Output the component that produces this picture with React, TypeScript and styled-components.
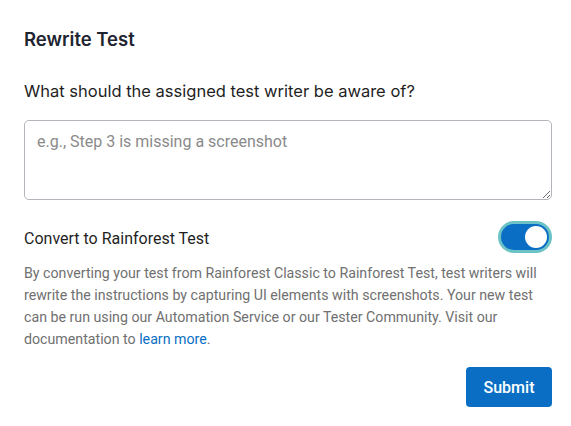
import React, { useState } from 'react';
import styled, { createGlobalStyle } from 'styled-components';

const GlobalStyle = createGlobalStyle`
    html, body {
        margin: 0;
        padding: 0;
        background: #ffffff;
    }
    body {
        font-family: Inter, "Noto Sans", "Liberation Sans", sans-serif;
        -webkit-font-smoothing: antialiased;
    }
`;

const Modal = styled.div`
    width: 571px;
    height: 426px;
    box-sizing: border-box;
    padding: 28px 19px 0 24px;
    display: flex;
    flex-direction: column;
    background: #ffffff;
`;

const Title = styled.h2`
    margin: 0;
    font-size: 18.5px;
    line-height: 22px;
    font-weight: 600;
    color: #1e2430;
`;

const FieldLabel = styled.label`
    margin-top: 30px;
    font-size: 16.5px;
    line-height: 22px;
    color: #1f1f1f;
`;

const NoteInput = styled.textarea`
    margin-top: 18px;
    width: 100%;
    height: 80px;
    box-sizing: border-box;
    padding: 10px 12px;
    border: 1px solid #b4b4bd;
    border-radius: 5px;
    font-family: Roboto, "Liberation Sans", sans-serif;
    font-size: 16px;
    line-height: 22px;
    color: #222;
    resize: vertical;
    outline: none;

    &::placeholder {
        color: #8a8a8a;
    }
`;

const ToggleRow = styled.div`
    margin-top: 21px;
    display: flex;
    align-items: center;
    justify-content: space-between;
`;

const ToggleLabel = styled.span`
    font-family: Roboto, "Liberation Sans", sans-serif;
    font-size: 16px;
    line-height: 22px;
    color: #1f1f1f;
    padding-top: 3px;
`;

const SwitchRing = styled.button<{ $on: boolean }>`
    width: 54px;
    height: 32px;
    box-sizing: border-box;
    padding: 3px;
    border: none;
    border-radius: 16px;
    background: ${p => (p.$on ? '#6cc3c6' : 'transparent')};
    cursor: pointer;
    display: flex;
`;

const SwitchTrack = styled.span<{ $on: boolean }>`
    flex: 1;
    border-radius: 13px;
    background: ${p => (p.$on ? '#0a6fc4' : '#c4c4cc')};
    display: flex;
    align-items: center;
    justify-content: ${p => (p.$on ? 'flex-end' : 'flex-start')};
    padding: 2px;
`;

const SwitchKnob = styled.span`
    width: 22px;
    height: 22px;
    border-radius: 50%;
    background: #ffffff;
`;

const Description = styled.p`
    margin: 9px 0 0;
    font-family: Roboto, "Liberation Sans", sans-serif;
    font-size: 14.2px;
    line-height: 22px;
    color: #707070;
`;

const DocLink = styled.a`
    color: #0a6fc4;
    text-decoration: none;
`;

const Footer = styled.div`
    margin-top: 17px;
    display: flex;
    justify-content: flex-end;
`;

const SubmitButton = styled.button`
    width: 86px;
    height: 40px;
    border: none;
    border-radius: 4px;
    background: #0a6fc4;
    color: #ffffff;
    font-family: Roboto, "Liberation Sans", sans-serif;
    font-size: 16px;
    font-weight: 500;
    cursor: pointer;
`;

const App = () => {
    const [converted, setConverted] = useState<boolean>(true);

    return (
        <>
            <GlobalStyle />
            <Modal>
                <Title>Rewrite Test</Title>
                <FieldLabel htmlFor="rewrite-note">What should the assigned test writer be aware of?</FieldLabel>
                <NoteInput id="rewrite-note" placeholder="e.g., Step 3 is missing a screenshot" />
                <ToggleRow>
                    <ToggleLabel>Convert to Rainforest Test</ToggleLabel>
                    <SwitchRing $on={converted} onClick={() => setConverted(!converted)} aria-pressed={converted}>
                        <SwitchTrack $on={converted}>
                            <SwitchKnob />
                        </SwitchTrack>
                    </SwitchRing>
                </ToggleRow>
                <Description>
                    By converting your test from Rainforest Classic to Rainforest Test, test writers will
                    rewrite the instructions by capturing UI elements with screenshots. Your new test
                    can be run using our Automation Service or our Tester Community. Visit our
                    documentation to <DocLink href="#">learn more</DocLink>.
                </Description>
                <Footer>
                    <SubmitButton>Submit</SubmitButton>
                </Footer>
            </Modal>
        </>
    );
};

export default App;
